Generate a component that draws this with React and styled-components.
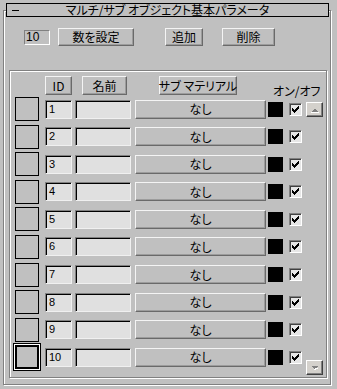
import React from 'react';
import styled, { createGlobalStyle } from 'styled-components';

const Global = createGlobalStyle`
  html, body { margin: 0; padding: 0; background: #c0c0c0; }
  * { box-sizing: border-box; }
  body {
    font-family: "Noto Sans CJK JP", sans-serif;
    font-size: 12px;
    color: #000;
    font-feature-settings: "palt";
  }
`;

const Page = styled.div`
  width: 337px;
  height: 389px;
  padding: 10px 0 0 3px;
  overflow: hidden;
`;

const Rollout = styled.div`
  width: 328px;
  border: 1px solid #808080;
  box-shadow: inset 1px 1px 0 #ffffff, 1px 1px 0 #ffffff;
  padding: 0 0 6px 0;
`;

const TitleBar = styled.div`
  display: grid;
  grid-template-columns: 1fr auto 1fr;
  align-items: center;
  width: 323px;
  height: 14px;
  margin: -8px 0 0 2px;
  border: 1px solid #000;
  background: #c0c0c0;
`;

const Minus = styled.span`
  display: block;
  width: 7px;
  height: 1px;
  margin-left: 5px;
  background: #000;
`;

const TitleText = styled.span`
  font-size: 12px;
  line-height: 12px;
  white-space: nowrap;
`;

const Controls = styled.div`
  display: flex;
  align-items: center;
  height: 18px;
  margin: 11px 0 0 20px;
`;

const CountField = styled.div`
  display: flex;
  align-items: center;
  width: 26px;
  height: 15px;
  padding-left: 1px;
  border: 1px solid;
  border-color: #808080 #ffffff #ffffff #808080;
  background: #c0c0c0;
  font: 12px/1 "Liberation Sans", sans-serif;
`;

const Button = styled.button`
  display: flex;
  align-items: center;
  justify-content: center;
  flex: none;
  width: ${p => p.$w}px;
  height: ${p => p.$h || 19}px;
  margin: 0 0 0 ${p => p.$ml || 0}px;
  padding: 0;
  background: #c0c0c0;
  border: 1px solid;
  border-color: #f4f4f4 #6a6a6a #6a6a6a #f4f4f4;
  box-shadow: inset -1px -1px 0 #9c9c9c;
  font: 12px/1 "Noto Sans CJK JP", sans-serif;
  font-feature-settings: "palt";
  color: #000;
  white-space: nowrap;
`;

const Group = styled.div`
  width: 318px;
  margin: 24px 0 0 5px;
  border: 1px solid #808080;
  box-shadow: inset 1px 1px 0 #ffffff, 1px 1px 0 #ffffff;
  padding: 5px 0 8px 5px;
`;

const Header = styled.div`
  display: flex;
  height: 19px;
`;

const OnOffLabel = styled.span`
  align-self: flex-end;
  margin: 0 0 -2px 36px;
  line-height: 12px;
  font-size: 12px;
  white-space: nowrap;
`;

const List = styled.div`
  display: flex;
  margin-top: 2px;
`;

const Rows = styled.div`
  display: flex;
  flex-direction: column;
  gap: 3.6px;
`;

const Row = styled.div`
  display: flex;
  align-items: center;
  height: 24px;
`;

const Swatch = styled.div`
  flex: none;
  width: 24px;
  height: 24px;
  background: #c0c0c0;
  border: ${p => (p.$selected ? 2 : 1)}px solid #000;
  box-shadow: ${p => (p.$selected ? '0 0 0 1px #ffffff, 0 0 0 2px #000' : 'none')};
`;

const Field = styled.div`
  display: flex;
  align-items: center;
  flex: none;
  width: ${p => p.$w}px;
  height: 19px;
  margin-left: ${p => p.$ml}px;
  padding-left: 3px;
  border: 1px solid;
  border-color: #808080 #f0f0f0 #f0f0f0 #808080;
  box-shadow: inset 1px 1px 0 #000;
  background: #e0e0e0;
  font: 11px/1 "Liberation Sans", sans-serif;
`;

const ColorChip = styled.div`
  flex: none;
  width: 15px;
  height: 15px;
  margin-left: 2px;
  background: #000;
`;

const CheckBox = styled.div`
  flex: none;
  width: 13px;
  height: 13px;
  margin-left: 6px;
  border: 1px solid;
  border-color: #808080 #ffffff #ffffff #808080;
  box-shadow: inset 1px 1px 0 #404040;
  background: #e6e6e6;
  svg { display: block; }
`;

const ScrollCol = styled.div`
  display: flex;
  flex-direction: column;
  justify-content: space-between;
  padding-top: 5px;
  margin: 0 0 -6px 4px;
`;

const ArrowBtn = styled.div`
  display: flex;
  align-items: center;
  justify-content: center;
  width: 17px;
  height: 15px;
  background: #d4d1cc;
  border: 1px solid;
  border-color: #ffffff #404040 #404040 #ffffff;
  box-shadow: inset -1px -1px 0 #808080;
  svg { display: block; }
`;

const checkCols = [2, 3, 4, 3, 2, 1, 0];

const Check = () => (
  <svg width="11" height="11" viewBox="0 0 11 11" shapeRendering="crispEdges">
    {checkCols.map((s, c) => (
      <rect key={c} x={2 + c} y={2 + s} width="1" height="3" fill="#000" />
    ))}
  </svg>
);

const UpArrow = () => (
  <svg width="9" height="6" viewBox="0 0 9 6" shapeRendering="crispEdges">
    <polygon points="1,5 8,5 4.5,1.5" fill="#808080" />
    <rect x="1" y="5" width="8" height="1" fill="#ffffff" />
  </svg>
);

const DownArrow = () => (
  <svg width="9" height="6" viewBox="0 0 9 6" shapeRendering="crispEdges">
    <polygon points="1,1 8,1 4.5,4.5" fill="#808080" />
    <rect x="5" y="3" width="3" height="1" fill="#ffffff" />
    <rect x="4" y="4" width="2" height="1" fill="#ffffff" />
  </svg>
);

const rows = Array.from({ length: 10 }, (_, i) => i + 1);

export default function App() {
  return (
    <>
      <Global />
      <Page>
        <Rollout>
          <TitleBar>
            <Minus />
            <TitleText>マルチ/サブ オブジェクト基本パラメータ</TitleText>
            <span />
          </TitleBar>
          <Controls>
            <CountField>10</CountField>
            <Button $w={76} $h={18} $ml={8}>数を設定</Button>
            <Button $w={38} $h={18} $ml={31}>追加</Button>
            <Button $w={53} $h={18} $ml={19}>削除</Button>
          </Controls>
          <Group>
            <Header>
              <Button $w={27} $ml={30}>ID</Button>
              <Button $w={45} $ml={10}>名前</Button>
              <Button $w={78} $ml={32}>サブ マテリアル</Button>
              <OnOffLabel>オン/オフ</OnOffLabel>
            </Header>
            <List>
              <Rows>
                {rows.map(n => (
                  <Row key={n}>
                    <Swatch $selected={n === 10} />
                    <Field $w={27} $ml={6}>{n}</Field>
                    <Field $w={56} $ml={3} />
                    <Button $w={131} $ml={4}>なし</Button>
                    <ColorChip />
                    <CheckBox><Check /></CheckBox>
                  </Row>
                ))}
              </Rows>
              <ScrollCol>
                <ArrowBtn><UpArrow /></ArrowBtn>
                <ArrowBtn><DownArrow /></ArrowBtn>
              </ScrollCol>
            </List>
          </Group>
        </Rollout>
      </Page>
    </>
  );
}
